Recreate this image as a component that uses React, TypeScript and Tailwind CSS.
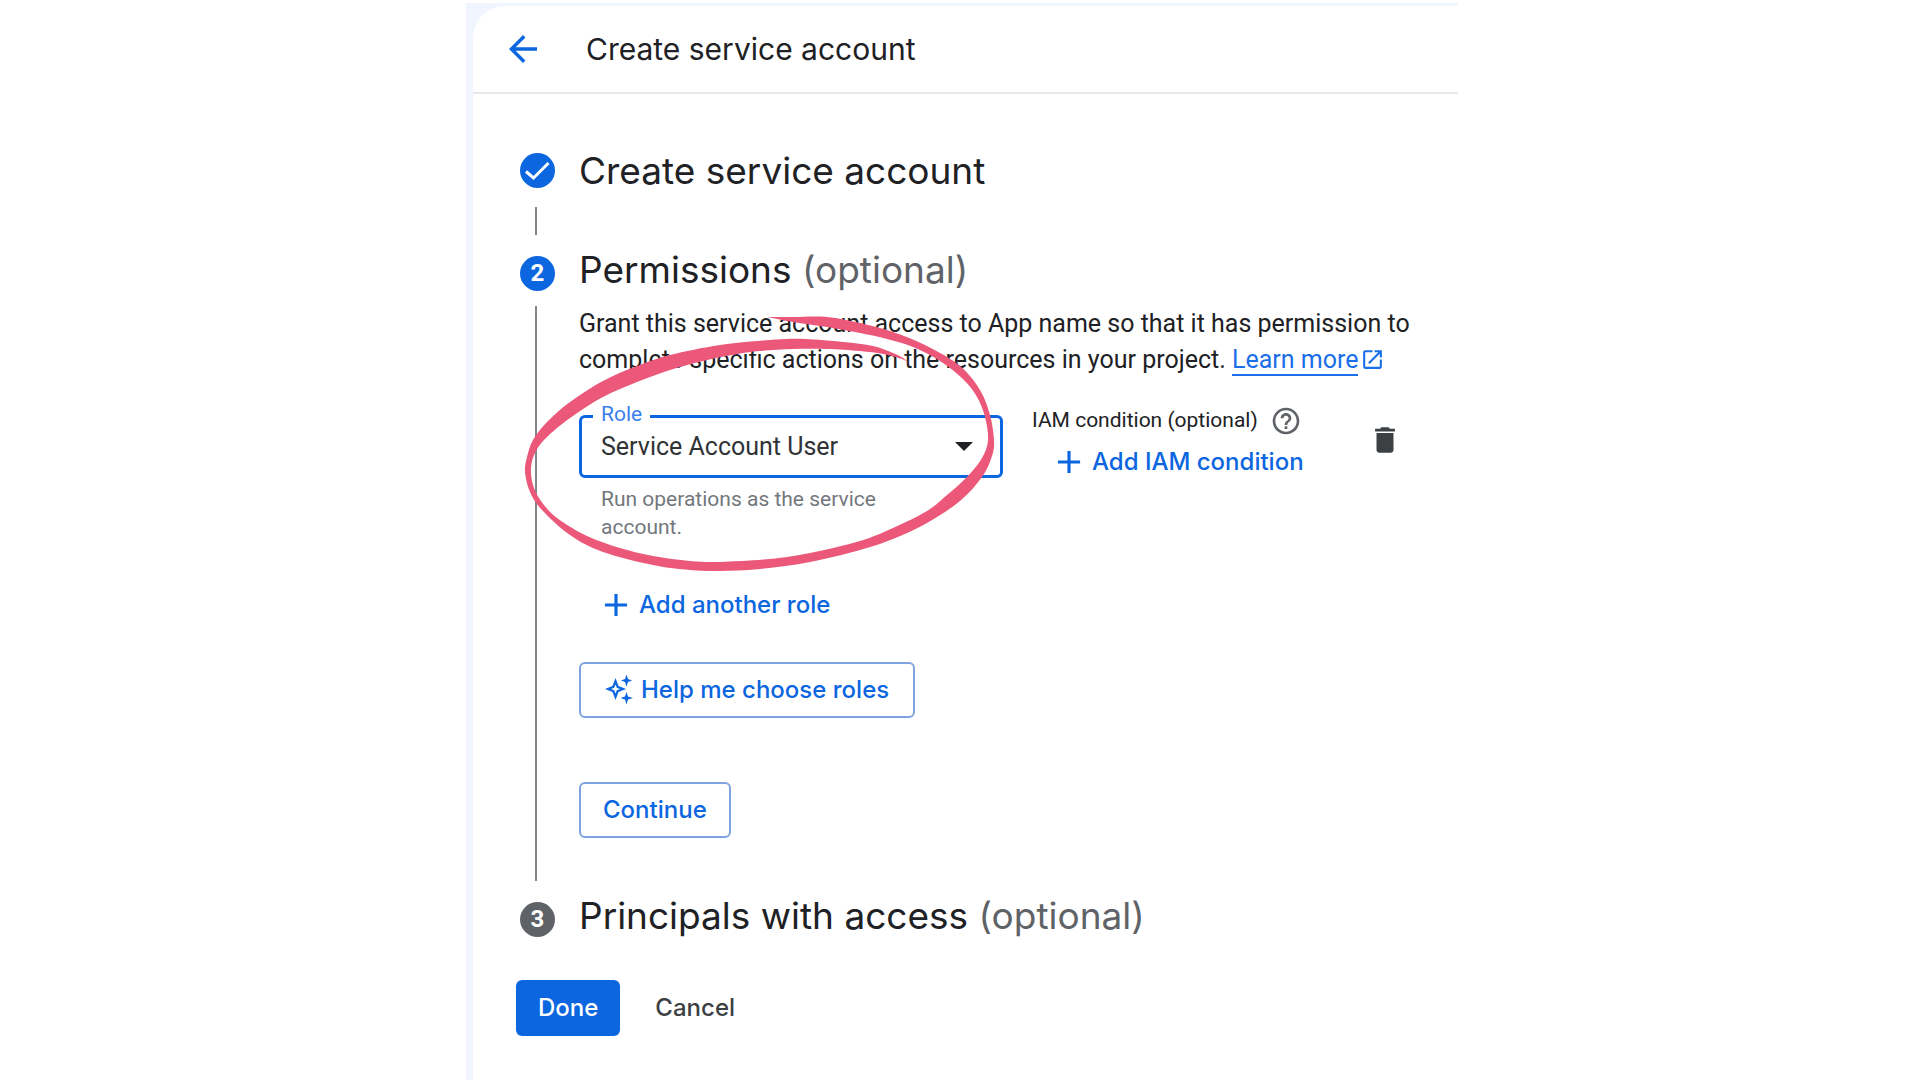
import type { ReactNode } from "react";
import { MdAdd, MdArrowBack, MdDelete, MdHelpOutline, MdOpenInNew } from "react-icons/md";

type Point = [number, number];

const MARKER_OUTLINE: Point[] = [
  [768, 317], [793, 317], [827, 317], [860, 323], [893, 332], [927, 346], [960, 366], [980, 390], [990, 415], [994, 440],
  [992, 456], [982, 477], [960, 501], [927, 523], [893, 539], [860, 550], [810, 562], [760, 569], [720, 571], [690, 570],
  [653, 565], [603, 552], [570, 535], [542, 510], [530, 492], [525, 472], [527, 457], [533, 440], [547, 422], [570, 402],
  [603, 381], [637, 366], [670, 355], [720, 345], [770, 340], [805, 339], [843, 342], [873, 346], [893, 353], [903, 358],
  [911, 365],
];

const MARKER_INNER: Point[] = [
  [911, 365], [902, 359], [883, 354], [860, 351], [827, 349], [793, 349], [760, 351], [737, 354], [703, 361], [670, 370],
  [637, 382], [603, 397], [570, 418], [546, 438], [535, 453], [531, 468], [533, 485], [541, 501], [557, 518], [587, 536],
  [620, 548], [653, 556], [690, 561], [720, 562], [770, 559], [810, 553], [860, 541], [893, 528], [927, 511], [947, 495],
  [967, 477], [982, 458], [988, 440], [985, 417], [977, 397], [963, 379], [940, 361], [913, 347], [887, 339], [860, 333],
  [827, 327], [793, 322], [768, 317],
];

function curve(points: Point[]): string {
  let d = "";
  for (let i = 0; i < points.length - 1; i++) {
    const p0 = points[Math.max(i - 1, 0)];
    const p1 = points[i];
    const p2 = points[i + 1];
    const p3 = points[Math.min(i + 2, points.length - 1)];
    d += `C${p1[0] + (p2[0] - p0[0]) / 6} ${p1[1] + (p2[1] - p0[1]) / 6} ${p2[0] - (p3[0] - p1[0]) / 6} ${p2[1] - (p3[1] - p1[1]) / 6} ${p2[0]} ${p2[1]}`;
  }
  return d;
}

function MarkerRing() {
  return (
    <svg
      aria-hidden="true"
      viewBox="520 310 480 270"
      className="pointer-events-none absolute top-[54px] left-0 h-[270px] w-[480px]"
    >
      <path d={`M768 317${curve(MARKER_OUTLINE)}${curve(MARKER_INNER)}Z`} fill="#eb5879" />
    </svg>
  );
}

function Sparkles() {
  return (
    <svg aria-hidden="true" viewBox="0 0 28 32" className="h-8 w-7 shrink-0" fill="#0b66e0">
      <path
        fillRule="evenodd"
        d="M10.5 4 13.5 12 21 15 13.5 18 10.5 26 7.5 18 0 15 7.5 12ZM10.5 10.5 9.2 13.7 6 15 9.2 16.3 10.5 19.5 11.8 16.3 15 15 11.8 13.7Z"
      />
      <path d="M21.5 .5 23 5 27 6.5 23 8 21.5 12.5 20 8 16 6.5 20 5Z" />
      <path d="M21.5 18 23 22.5 28 24 23 25.5 21.5 30.5 20 25.5 15.5 24 20 22.5Z" />
    </svg>
  );
}

function Badge({ tone, children }: { tone: "blue" | "gray"; children: ReactNode }) {
  return (
    <span
      className={`flex size-[35px] shrink-0 items-center justify-center rounded-full font-['Roboto',sans-serif] text-[24px] leading-[35px] font-bold text-white ${
        tone === "blue" ? "bg-[#0b66e0]" : "bg-[#5f6368]"
      }`}
    >
      {children}
    </span>
  );
}

export default function App() {
  return (
    <div className="flex min-h-screen flex-col bg-white pt-[3px] pl-1 font-['Inter',sans-serif] text-[#202124]">
      <div className="mx-auto flex w-full max-w-[992px] grow flex-col bg-[#f0f5ff] pt-[3px] pl-[7px]">
        <div className="grow rounded-tl-[32px] bg-white">
          <header className="flex h-[88px] items-center gap-[42px] border-b-2 border-[#e6e8eb] pl-[29px]">
            <button type="button" aria-label="Back" className="text-[#0b66e0]">
              <MdArrowBack className="size-[42px]" />
            </button>
            <h1 className="text-[30px] leading-[36px]">Create service account</h1>
          </header>

          <main className="pt-[59px] pb-11">
            <ol className="pr-11 pl-[47px]">
              <li className="flex gap-6">
                <div className="flex w-[35px] flex-col">
                  <Badge tone="blue">
                    <svg aria-label="Completed" viewBox="0 0 35 35" className="size-[35px]" fill="none" stroke="#fff" strokeWidth="3">
                      <path d="M6 18.5 13.5 25 28.5 10" />
                    </svg>
                  </Badge>
                  <span className="mt-[19px] mb-[21px] ml-[15px] h-7 w-[2px] bg-[#80868b]" />
                </div>
                <h2 className="text-[37px] leading-[35px]">Create service account</h2>
              </li>

              <li className="relative flex gap-6">
                <div className="flex w-[35px] shrink-0 flex-col">
                  <Badge tone="blue">2</Badge>
                  <span className="mt-[15px] mb-[21px] ml-[15px] w-[2px] grow bg-[#80868b]" />
                </div>
                <div className="min-w-0 grow pb-16">
                  <h2 className="text-[37px] leading-[28px]">
                    Permissions <span className="text-[#5f6368]">(optional)</span>
                  </h2>
                  <p className="mt-[22px] font-['Roboto',sans-serif] text-[25px] leading-[36px]">
                    Grant this service account access to App name so that it has permission to complete specific actions on the
                    resources in your project.{" "}
                    <a href="#learn-more" className="border-b-2 border-[#1a6fe8] text-[#1a6fe8]">
                      Learn more
                    </a>
                    <MdOpenInNew className="ml-[2px] inline size-[25px] align-[-4px] text-[#1a6fe8]" />
                  </p>

                  <div className="mt-[25px] flex items-start font-['Roboto',sans-serif]">
                    <div className="relative w-[424px] pt-3">
                      <label
                        htmlFor="role"
                        className="absolute -top-px left-[14px] bg-white px-2 text-[21px] leading-[24px] text-[#3b80ea]"
                      >
                        Role
                      </label>
                      <select
                        id="role"
                        defaultValue="user"
                        className="h-[63px] w-full appearance-none rounded-[6px] border-[3px] border-[#0b66e0] bg-transparent pl-[19px] text-[25px] text-[#303336] outline-none"
                      >
                        <option value="user">Service Account User</option>
                      </select>
                      <svg
                        aria-hidden="true"
                        viewBox="0 0 18 9"
                        className="pointer-events-none absolute top-[39px] right-[30px] h-[9px] w-[18px]"
                      >
                        <path d="M0 0H18L9 9Z" fill="#202124" />
                      </svg>
                      <p className="mt-[7px] pr-20 pl-[22px] text-[21px] leading-[28px] text-[#73777c]">
                        Run operations as the service account.
                      </p>
                    </div>

                    <div className="ml-[29px] pt-[2px]">
                      <div className="flex h-8 items-center gap-[12px] text-[21px] whitespace-nowrap">
                        IAM condition (optional)
                        <button type="button" aria-label="About IAM conditions" className="text-[#5f6368]">
                          <MdHelpOutline className="size-8" />
                        </button>
                      </div>
                      <button
                        type="button"
                        className="mt-[6px] ml-[18px] flex h-[38px] items-center gap-1 font-['Inter',sans-serif] text-[24px] font-medium whitespace-nowrap text-[#0b66e0]"
                      >
                        <MdAdd className="size-[38px]" />
                        Add IAM condition
                      </button>
                    </div>

                    <button type="button" aria-label="Delete role" className="mt-5 mr-3 ml-auto text-[#3c4043]">
                      <MdDelete className="size-[34px]" />
                    </button>
                  </div>

                  <button
                    type="button"
                    className="mt-[45px] ml-[18px] flex h-[38px] items-center gap-1 text-[24px] font-medium text-[#0b66e0]"
                  >
                    <MdAdd className="size-[38px]" />
                    Add another role
                  </button>
                  <button
                    type="button"
                    className="mt-[38px] flex h-14 items-center gap-2 rounded-[6px] border-2 border-[#7fa4e0] px-6 text-[24px] font-medium text-[#0b66e0]"
                  >
                    <Sparkles />
                    Help me choose roles
                  </button>
                  <button
                    type="button"
                    className="mt-16 flex h-14 items-center rounded-[6px] border-2 border-[#7fa4e0] px-[22px] text-[24px] font-medium text-[#0b66e0]"
                  >
                    Continue
                  </button>
                </div>
                <MarkerRing />
              </li>

              <li className="flex gap-6">
                <Badge tone="gray">3</Badge>
                <h2 className="text-[37px] leading-[28px]">
                  Principals with access <span className="text-[#5f6368]">(optional)</span>
                </h2>
              </li>
            </ol>

            <div className="mt-[43px] flex gap-4 pl-[43px] text-[24px] font-medium">
              <button type="button" className="h-14 rounded-[6px] bg-[#0b66e0] px-[22px] text-white">
                Done
              </button>
              <button type="button" className="h-14 px-[19px] text-[#3c4043]">
                Cancel
              </button>
            </div>
          </main>
        </div>
      </div>
    </div>
  );
}
